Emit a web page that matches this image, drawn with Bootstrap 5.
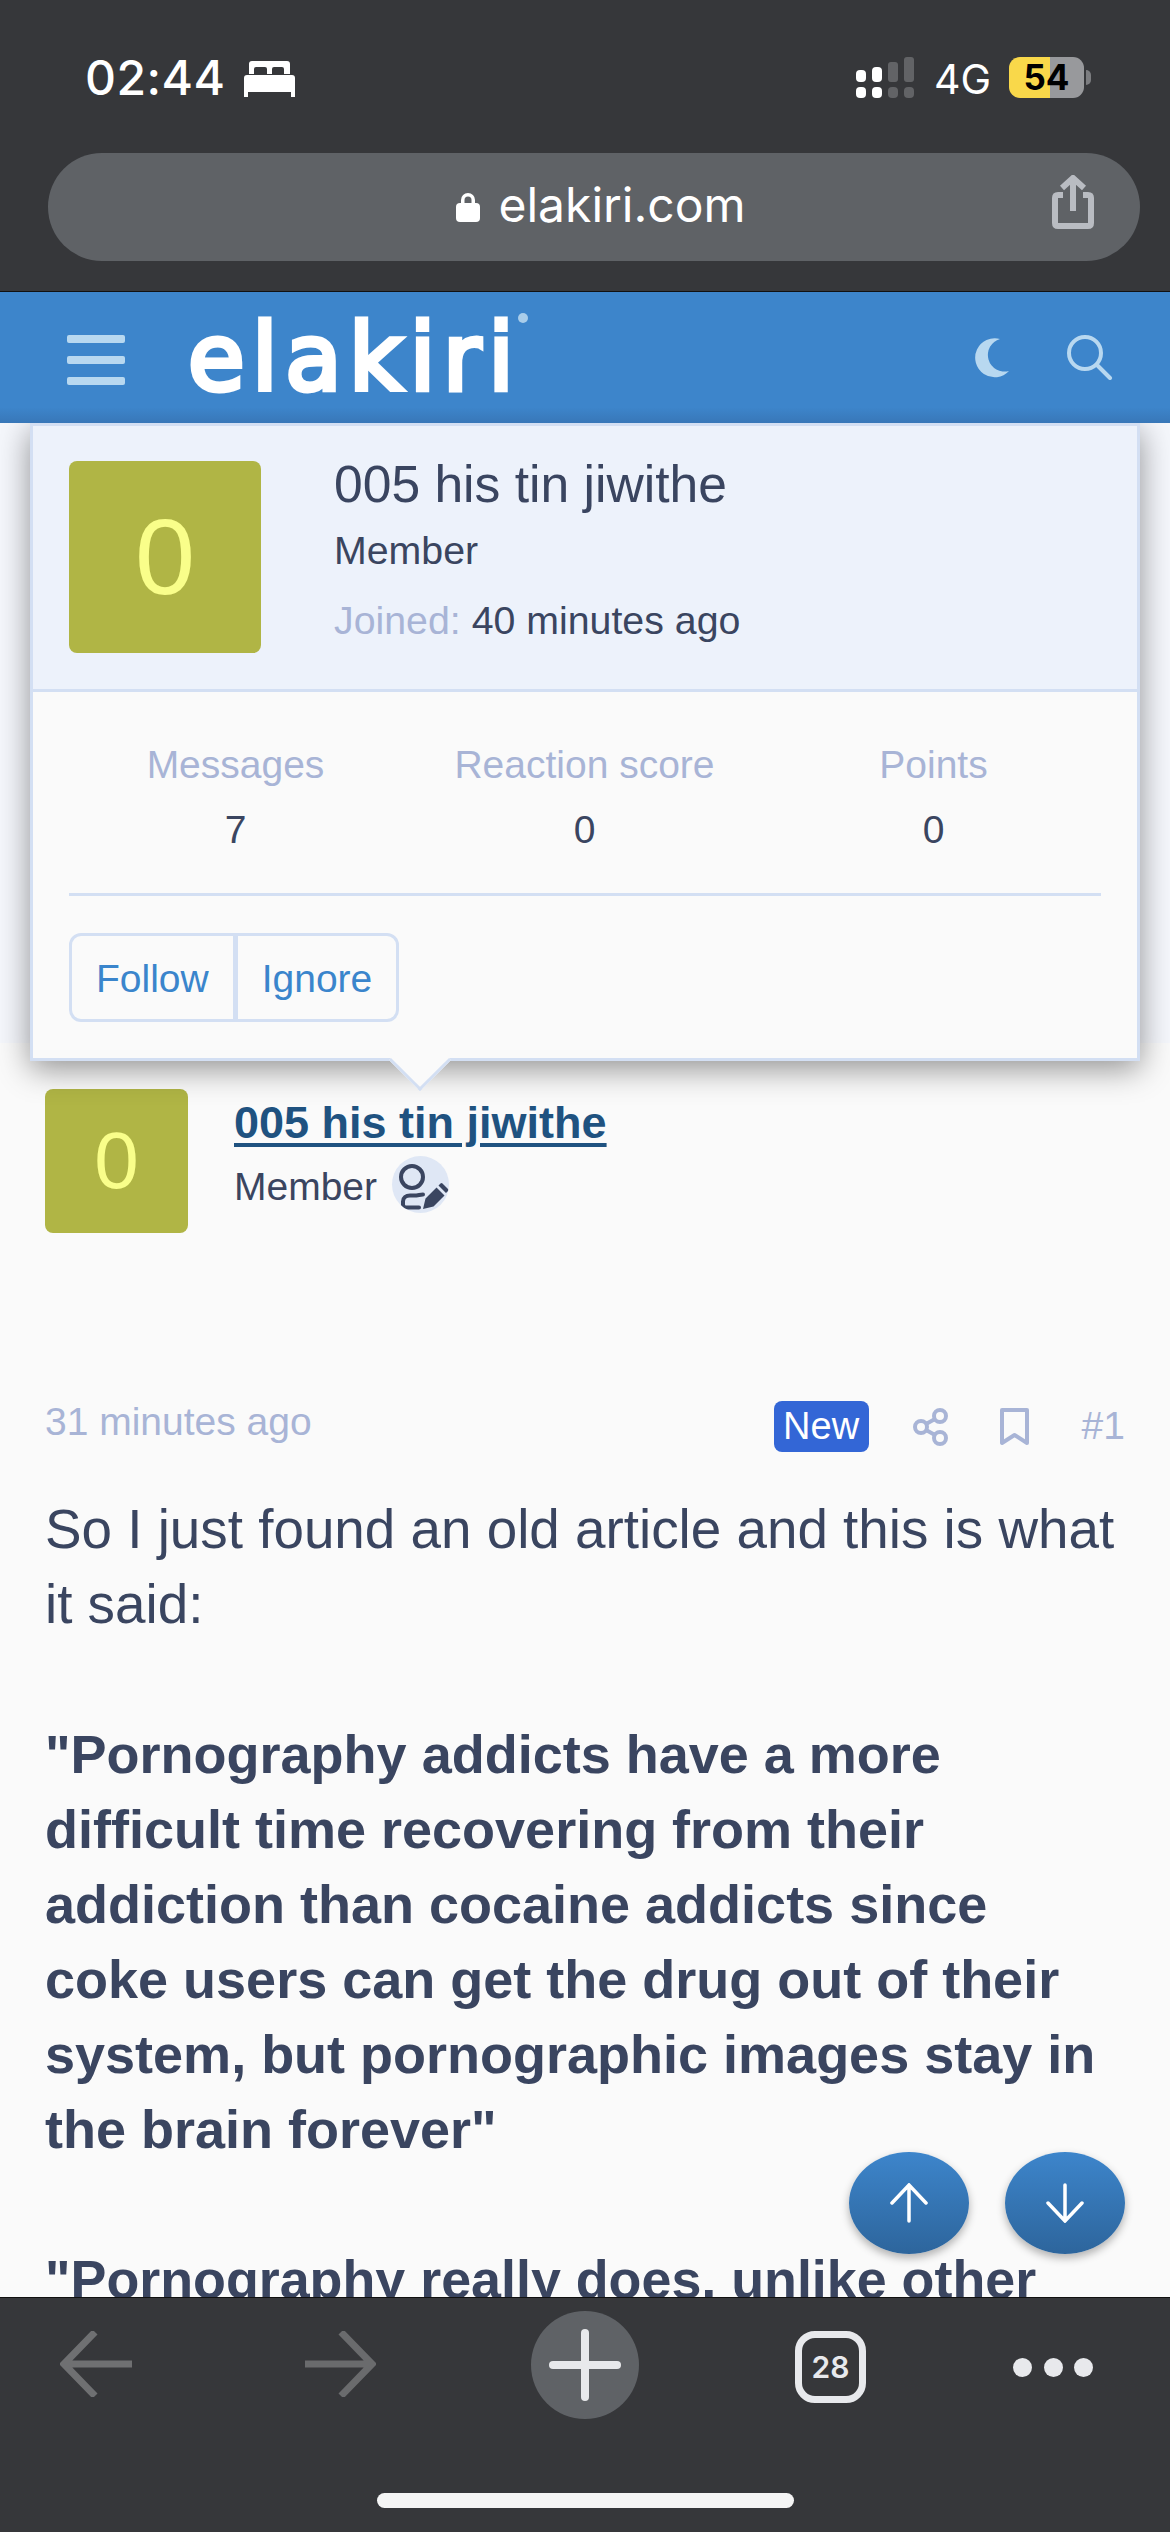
<!DOCTYPE html>
<html lang="en">
<head>
  <meta charset="UTF-8">
  <title>elakiri.com</title>
  <meta name="viewport" content="width=device-width, initial-scale=1">
  <link href="https://cdn.jsdelivr.net/npm/bootstrap@5.3.0/dist/css/bootstrap.min.css" rel="stylesheet">
  <style>
    body { background: #36373a; font-family: "Liberation Sans", Arial, sans-serif; color: #3a4560; }
    .phone { width: 1170px; height: 2532px; overflow: hidden; }

    /* ios chrome */
    .top-chrome { height: 292px; background: #36373a; border-bottom: 1px solid #111; flex: none; }
    .status-row { height: 153px; padding: 54px 86px 0 85px; font-family: Inter, sans-serif; color: #fff; }
    .clock { font-size: 48px; font-weight: 500; line-height: 48px; letter-spacing: .5px; }
    .bed-ico { margin: 7px 0 0 18px; }
    .signal-ico { margin: 3px 0 0 auto; }
    .net { font-size: 41px; line-height: 48px; margin: 1px 18px 0 20px; }
    .batt { width: 75px; height: 41px; margin-top: 3px; border-radius: 11px; background: linear-gradient(90deg, #f9d84a 55%, #98999c 55%); color: #000; font-size: 35px; font-weight: 700; line-height: 41px; text-align: center; position: relative; }
    .batt::after { content: ""; position: absolute; left: 77px; top: 13px; width: 5px; height: 15px; background: #7c7d80; border-radius: 0 5px 5px 0; }
    .url-bar { height: 108px; margin: 0 30px 0 48px; border-radius: 54px; background: #5f6266; position: relative; font-family: Inter, sans-serif; font-size: 48px; color: #fff; }
    .url-lock { margin: 0 18px 0 14px; }
    .url-text { margin-top: -5px; }
    .url-share { position: absolute; right: 46px; top: 22px; }

    .site-nav { height: 131px; flex: none; padding: 0 20px 0 67px; background: linear-gradient(180deg, #3d85cb 88%, #3877b8 100%); }
    .burger { width: 58px; margin-top: 4px; }
    .burger i { display: block; height: 8px; border-radius: 2px; background: #b8d8f0; margin-bottom: 13px; }
    .burger i:last-child { margin-bottom: 0; }
    .site-logo { font-family: "DejaVu Sans", sans-serif; font-weight: 400; font-size: 92px; line-height: 1; letter-spacing: 7.5px; color: #fff; -webkit-text-stroke: 5px #fff; margin: 2px 0 0 63px; filter: blur(.7px); position: relative; }
    .site-logo sup { position: absolute; right: -7px; top: 0; width: 10px; height: 10px; border-radius: 50%; background: #a9cdea; }
    .nav-tools { margin-left: auto; gap: 57px; margin-right: 37px; }

    .page-area { flex: 1 1 0; min-height: 0; position: relative; overflow: hidden; background: #fafafa; }
    .thread-band { height: 620px; background: #f5f7fc; }
    .post-wrap { padding: 46px 45px 0; }
    .poster-row { gap: 46px; }

    .av-square { background: #b0b545; color: #f9fe8a; border-radius: 8px; display: flex; align-items: center; justify-content: center; flex: none; }
    .av-big { width: 192px; height: 192px; font-size: 108px; }
    .av-mid { width: 143px; height: 144px; font-size: 80px; }
    .poster-name { font-size: 45px; font-weight: 700; line-height: 52px; margin-top: 8px; color: #1f5280; text-decoration: underline; text-decoration-thickness: 4px; text-underline-offset: 5px; display: block; }
    .poster-role { font-size: 39px; line-height: 57px; margin-top: 4px; gap: 15px; }
    .poster-role span { padding-top: 5px; }
    .role-ico { width: 57px; height: 57px; flex: none; border-radius: 50%; background: #dfe7f5; display: block; }

    .post-meta { margin-top: 168px; height: 51px; color: #a8b4d6; font-size: 39px; }
    .post-time { margin-top: -8px; }
    .new-tag { background: #3366d6; color: #fff; border-radius: 8px; width: 95px; height: 51px; line-height: 51px; text-align: center; font-size: 38px; }
    .meta-share { margin-left: 44px; }
    .meta-mark { margin-left: 52px; }
    .meta-num { margin-left: 53px; }
    .post-text { font-size: 54px; line-height: 75px; margin-top: 40px; }
    .post-text p { margin: 0 0 75px; }
    .post-text .post-lead { font-size: 54.8px; }
    .post-text .post-end { font-size: 53.8px; }

    /* member tooltip */
    .member-tip { position: absolute; left: 30px; top: 0; width: 1110px; height: 638px; background: #fafafa; border: 3px solid #d3dff3; box-shadow: 0 8px 30px rgba(0,0,0,.42); z-index: 5; }
    .member-tip::after { content: ""; position: absolute; left: 365px; top: 612px; width: 44px; height: 44px; background: #fafafa; border-right: 3px solid #d3dff3; border-bottom: 3px solid #d3dff3; transform: rotate(45deg); }
    .tip-head { height: 266px; background: #edf2fb; border-bottom: 3px solid #d3dff3; padding: 35px 36px 0; }
    .tip-info { margin-left: 73px; }
    .tip-name { font-size: 51.6px; line-height: 60px; margin-top: -7px; }
    .tip-line { font-size: 39.3px; line-height: 46px; }
    .tip-line.one { margin-top: 13px; }
    .tip-line.two { margin-top: 24px; }
    .tip-muted { color: #a8b4d6; }
    .tip-stats { margin: 0 36px; height: 204px; padding-top: 50px; border-bottom: 3px solid #d3dff3; }
    .tip-stat { width: 349px; text-align: center; font-size: 39px; line-height: 46px; }
    .tip-stat div + div { margin-top: 19px; }
    .tip-stats-in { margin: 0 -7px 0 -8px; }
    .tip-actions { padding: 37px 36px 0; }
    .tip-btn { font-size: 39px; line-height: 46px; color: #3a85cc; background: transparent; border: 3px solid #d3dff3; border-radius: 12px; padding: 20px 24px 16px; height: 89px; }
    .tip-btn:hover { color: #3a85cc; border-color: #d3dff3; }

    .scroll-btns { position: absolute; right: 45px; bottom: 43px; gap: 36px; z-index: 4; }
    .scroll-btn { width: 120px; height: 102px; border-radius: 50%; background: linear-gradient(180deg, #3d85cb, #2d659c); box-shadow: 0 4px 8px rgba(0,0,0,.3); }

    .bottom-chrome { height: 235px; flex: none; background: #36373a; border-top: 1px solid #111; position: relative; padding: 33px 0 0 60px; }
    .plus-circle { width: 108px; height: 108px; border-radius: 50%; background: #5f6266; margin: -20px 156px 0 155px; }
    .fwd-ico { margin-left: 173px; }
    .tab-count { width: 71px; height: 72px; border: 7px solid #e8e9ec; border-radius: 20px; color: #e8e9ec; font-family: Inter, sans-serif; font-size: 30px; font-weight: 600; }
    .more-dots { margin-left: 147px; gap: 11.5px; height: 72px; }
    .more-dots i { width: 19px; height: 19px; border-radius: 50%; background: #e8e9ec; }
    .home-bar { position: absolute; left: 377px; bottom: 24px; width: 417px; height: 15px; border-radius: 8px; background: #f5f5f5; }
  </style>
</head>
<body class="m-0">
  <div class="phone d-flex flex-column">

    <div class="top-chrome">
      <div class="status-row d-flex align-items-start">
        <span class="clock">02:44</span>
        <svg class="bed-ico" width="51" height="36" viewBox="0 0 51 36" fill="#fff"><path d="M5 3q0-3 3-3h35q3 0 3 3v10h-6V8q0-2-2-2H30q-2 0-2 2v5h-5V8q0-2-2-2H12q-2 0-2 2v5H5z"/><path d="M0 17q0-3 3-3h45q3 0 3 3v19h-4v-5H4v5H0z"/></svg>
        <svg class="signal-ico" width="58" height="42" viewBox="0 0 58 42" fill="#fff">
          <rect x="0" y="13" width="10" height="12" rx="4"/><rect x="0" y="30" width="10" height="11" rx="4"/>
          <rect x="16" y="10" width="10" height="15" rx="4"/><rect x="16" y="30" width="10" height="11" rx="4"/>
          <g fill="#626366"><rect x="32" y="5" width="10" height="20" rx="3"/><rect x="32" y="30" width="10" height="11" rx="4"/><rect x="48" y="0" width="10" height="25" rx="3"/><rect x="48" y="30" width="10" height="11" rx="4"/></g>
        </svg>
        <span class="net">4G</span>
        <span class="batt">54</span>
      </div>
      <div class="url-bar d-flex align-items-center justify-content-center">
        <svg class="url-lock" width="24" height="30" viewBox="0 0 24 30" fill="#fff"><path d="M5 12V8a7 7 0 0 1 14 0v4h-3.500V8a3.500 3.500 0 0 0-7 0v4z"/><rect y="11" width="24" height="19" rx="4"/></svg>
        <span class="url-text">elakiri.com</span>
        <svg class="url-share" width="42" height="54" viewBox="0 0 42 54" fill="none" stroke="#b9bcc2" stroke-width="6"><path d="M11 20H6q-3 0-3 3v25q0 3 3 3h30q3 0 3-3V23q0-3-3-3h-5"/><path d="M21 36V3M10 13 21 3l11 10"/></svg>
      </div>
    </div>

    <nav class="site-nav d-flex align-items-center">
      <div class="burger"><i></i><i></i><i></i></div>
      <div class="site-logo">elakiri<sup></sup></div>
      <div class="nav-tools d-flex align-items-center">
        <svg width="36" height="40" viewBox="0 0 36 40" fill="#b8d8f0"><path d="M26 1A19.500 19.500 0 1 0 35 33 16.500 16.500 0 0 1 26 1Z"/></svg>
        <svg width="46" height="45" viewBox="0 0 46 45" fill="none" stroke="#b8d8f0" stroke-width="4" stroke-linecap="round"><circle cx="18" cy="18" r="16"/><path d="M30 30 43 43"/></svg>
      </div>
    </nav>

    <div class="page-area">
      <div class="thread-band"></div>

      <div class="post-wrap">
        <div class="poster-row d-flex">
          <div class="av-square av-mid">0</div>
          <div>
            <a class="poster-name" href="#">005 his tin jiwithe</a>
            <div class="poster-role d-flex align-items-center">
              <span>Member</span>
              <svg class="role-ico" viewBox="0 0 57 57" fill="none" stroke="#3a4560" stroke-width="4" stroke-linecap="round">
                <circle cx="20" cy="21" r="11"/>
                <path d="M31 38.500c-3 0-5 1-9 1h-4c-4 0-7 2-7 6v3c0 2 1 3 3 3h13"/>
                <path fill="#3a4560" stroke="none" d="M31 53l2.500-10.500 11-11 8 8-11 11zM46.500 29.500l2-2q1-1 2 0l5.500 5.500q1 1 0 2l-2 2z"/>
              </svg>
            </div>
          </div>
        </div>

        <div class="post-meta d-flex align-items-center">
          <span class="post-time me-auto">31 minutes ago</span>
          <span class="new-tag">New</span>
          <svg class="meta-share" width="35" height="38" viewBox="0 0 35 38" fill="none" stroke="#a8b4d6" stroke-width="4"><circle cx="8" cy="19" r="6"/><circle cx="27" cy="8" r="6"/><circle cx="27" cy="30" r="6"/><path d="M13 16 22 11M13 22l9 5"/></svg>
          <svg class="meta-mark" width="29" height="38" viewBox="0 0 29 38" fill="none" stroke="#a8b4d6" stroke-width="4" stroke-linejoin="round"><path d="M2 2h25v33l-12.500-8L2 35z"/></svg>
          <span class="meta-num">#1</span>
        </div>

        <div class="post-text">
          <p class="post-lead">So I just found an old article and this is what it said:</p>
          <p class="fw-bold">"Pornography addicts have a more difficult time recovering from their addiction than cocaine addicts since coke users can get the drug out of their system, but pornographic images stay in the brain forever"</p>
          <p class="fw-bold post-end">"Pornography really does, unlike other</p>
        </div>
      </div>

      <div class="member-tip">
        <div class="tip-head d-flex align-items-start">
          <div class="av-square av-big">0</div>
          <div class="tip-info">
            <div class="tip-name">005 his tin jiwithe</div>
            <div class="tip-line one">Member</div>
            <div class="tip-line two"><span class="tip-muted">Joined:</span> 40 minutes ago</div>
          </div>
        </div>
        <div class="tip-stats">
          <div class="tip-stats-in d-flex">
            <div class="tip-stat"><div class="tip-muted">Messages</div><div>7</div></div>
            <div class="tip-stat"><div class="tip-muted">Reaction score</div><div>0</div></div>
            <div class="tip-stat"><div class="tip-muted">Points</div><div>0</div></div>
          </div>
        </div>
        <div class="tip-actions">
          <div class="btn-group">
            <a class="btn tip-btn" href="#">Follow</a>
            <a class="btn tip-btn" href="#">Ignore</a>
          </div>
        </div>
      </div>

      <div class="scroll-btns d-flex">
        <div class="scroll-btn d-flex align-items-center justify-content-center">
          <svg width="38" height="40" viewBox="0 0 38 40" fill="none" stroke="#fff" stroke-width="3.500" stroke-linecap="round"><path d="M19 38V2M2 20 19 2l17 18"/></svg>
        </div>
        <div class="scroll-btn d-flex align-items-center justify-content-center">
          <svg width="38" height="40" viewBox="0 0 38 40" fill="none" stroke="#fff" stroke-width="3.500" stroke-linecap="round"><path d="M19 2v36M2 20l17 18 17-18"/></svg>
        </div>
      </div>
    </div>

    <div class="bottom-chrome d-flex align-items-start">
      <svg width="72" height="66" viewBox="0 0 72 66" fill="none" stroke="#6f7072" stroke-width="7"><path d="M72 33H5M35 1 4 33l31 32"/></svg>
      <svg class="fwd-ico" width="71" height="66" viewBox="0 0 71 66" fill="none" stroke="#6a6b6d" stroke-width="7"><path d="M0 33h66M36 1l31 32-31 32"/></svg>
      <div class="plus-circle d-flex align-items-center justify-content-center">
        <svg width="72" height="72" viewBox="0 0 72 72" fill="#e8e9ec"><rect x="32" width="8" height="72" rx="4"/><rect y="32" width="72" height="8" rx="4"/></svg>
      </div>
      <div class="tab-count d-flex align-items-center justify-content-center">28</div>
      <div class="more-dots d-flex align-items-center"><i></i><i></i><i></i></div>
      <div class="home-bar"></div>
    </div>
  </div>
</body>
</html>
